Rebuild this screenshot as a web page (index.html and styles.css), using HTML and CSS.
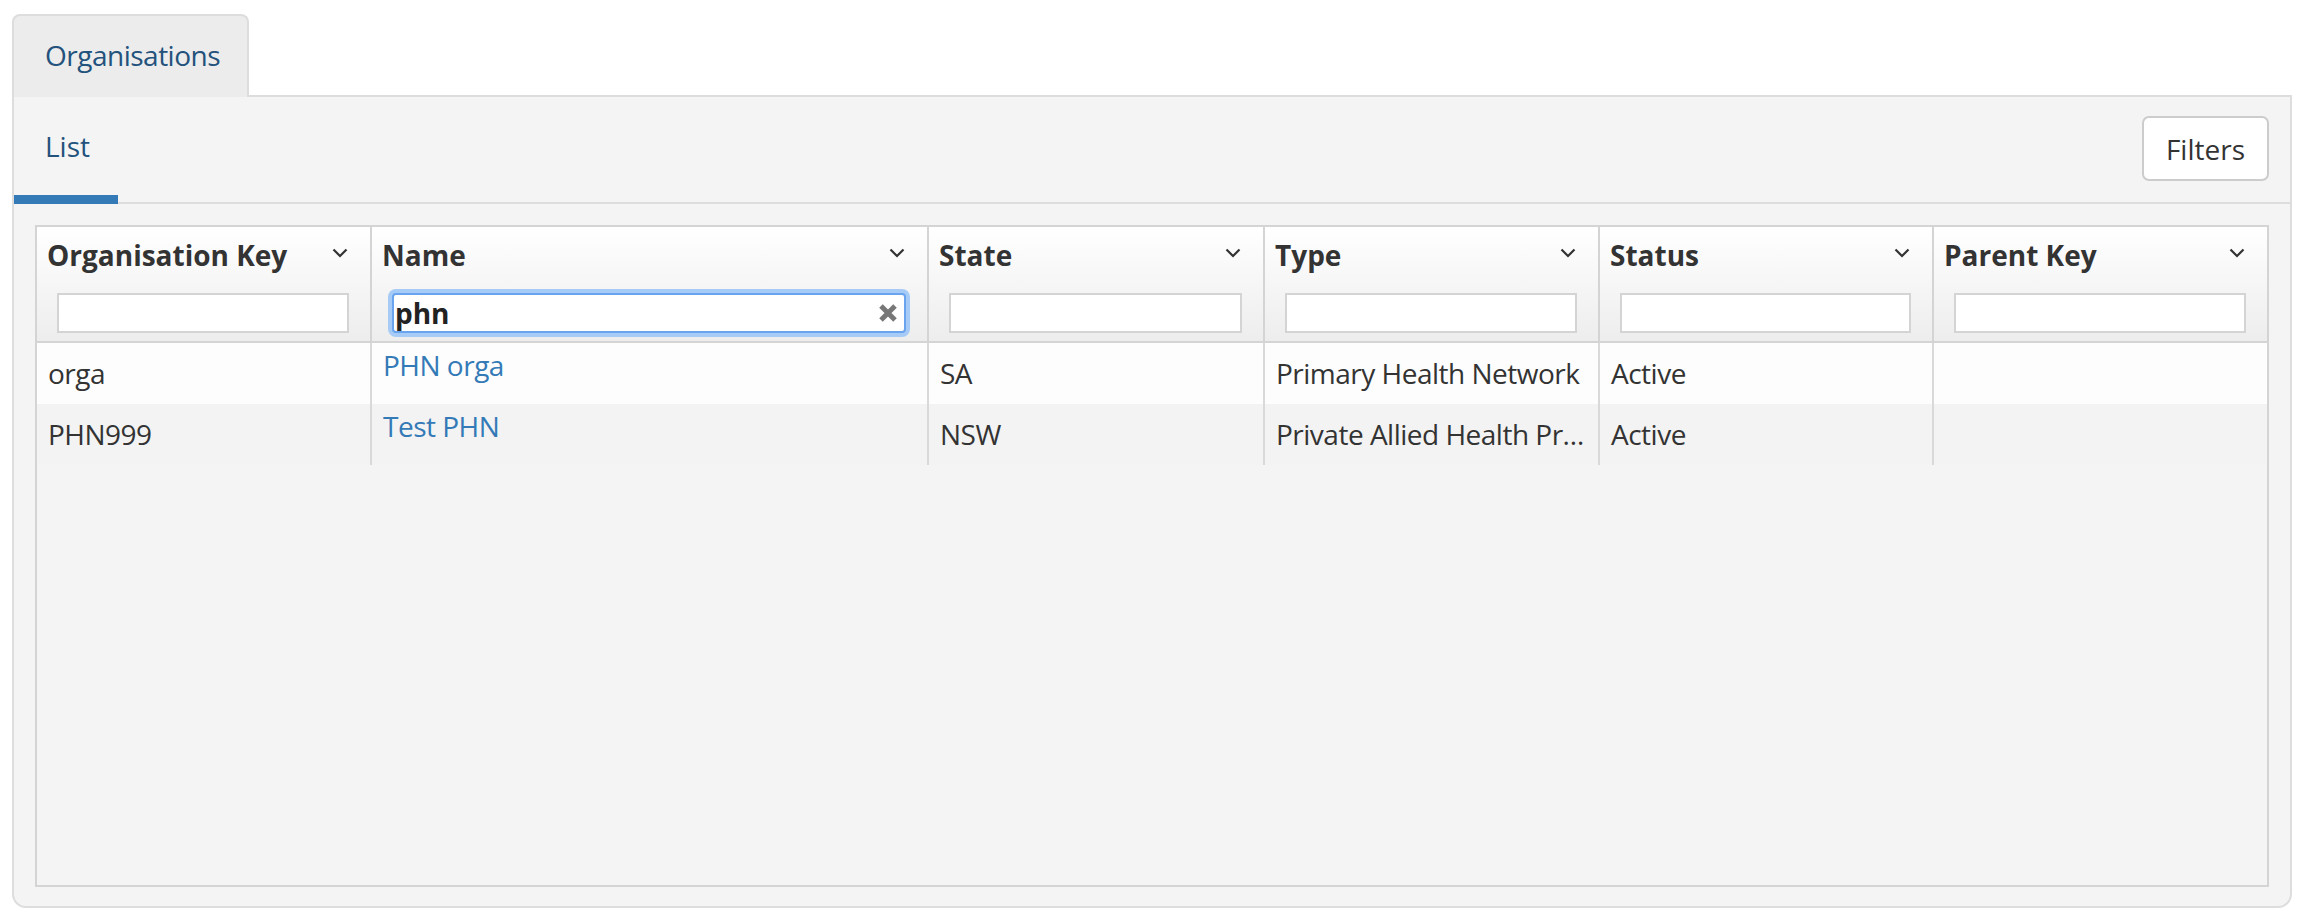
FILE: index.html
```html
<!DOCTYPE html>
<html lang="en">
<head>
<meta charset="utf-8">
<title>Organisations</title>
<link rel="stylesheet" href="styles.css">
</head>
<body>
<div class="page">
  <ul class="tabs">
    <li class="tab">Organisations</li>
  </ul>
  <div class="panel">
    <div class="subnav">
      <div class="subtab">List</div>
      <button class="btn">Filters</button>
    </div>
    <div class="panel-body">
      <div class="grid">
        <div class="grid-header">
          <div class="hcell">
            <div class="htitle"><span>Organisation Key</span><svg class="chev" viewBox="0 0 16 10"><path d="M1.5 1.5 L8 8 L14.5 1.5"/></svg></div>
            <div class="hfilter"><input class="finput" type="text"></div>
          </div>
          <div class="hcell">
            <div class="htitle"><span>Name</span><svg class="chev" viewBox="0 0 16 10"><path d="M1.5 1.5 L8 8 L14.5 1.5"/></svg></div>
            <div class="hfilter">
              <div class="focus-wrap">
                <input class="finput focused" type="text" value="phn">
                <svg class="clear" viewBox="0 0 20 20"><path d="M3 3 L17 17 M17 3 L3 17"/></svg>
              </div>
            </div>
          </div>
          <div class="hcell">
            <div class="htitle"><span>State</span><svg class="chev" viewBox="0 0 16 10"><path d="M1.5 1.5 L8 8 L14.5 1.5"/></svg></div>
            <div class="hfilter"><input class="finput" type="text"></div>
          </div>
          <div class="hcell">
            <div class="htitle"><span>Type</span><svg class="chev" viewBox="0 0 16 10"><path d="M1.5 1.5 L8 8 L14.5 1.5"/></svg></div>
            <div class="hfilter"><input class="finput" type="text"></div>
          </div>
          <div class="hcell">
            <div class="htitle"><span>Status</span><svg class="chev" viewBox="0 0 16 10"><path d="M1.5 1.5 L8 8 L14.5 1.5"/></svg></div>
            <div class="hfilter"><input class="finput" type="text"></div>
          </div>
          <div class="hcell last">
            <div class="htitle"><span>Parent Key</span><svg class="chev" viewBox="0 0 16 10"><path d="M1.5 1.5 L8 8 L14.5 1.5"/></svg></div>
            <div class="hfilter"><input class="finput" type="text"></div>
          </div>
        </div>
        <div class="grid-body">
          <div class="row odd">
            <div class="cell">orga</div>
            <div class="cell link-cell"><a href="#">PHN orga</a></div>
            <div class="cell">SA</div>
            <div class="cell">Primary Health Network</div>
            <div class="cell">Active</div>
            <div class="cell last"></div>
          </div>
          <div class="row even">
            <div class="cell">PHN999</div>
            <div class="cell link-cell"><a href="#">Test PHN</a></div>
            <div class="cell">NSW</div>
            <div class="cell">Private Allied Health Pr…</div>
            <div class="cell">Active</div>
            <div class="cell last"></div>
          </div>
        </div>
      </div>
    </div>
  </div>
</div>
</body>
</html>
```

FILE: styles.css
```css
* {
  box-sizing: border-box;
}

html, body {
  margin: 0;
  background: #ffffff;
}

body {
  font-family: "Open Sans", "Noto Sans", sans-serif;
  font-size: 28px;
  line-height: 40px;
  color: #333333;
}

.page {
  padding: 14px 8px 0 12px;
}

.tabs {
  display: flex;
  margin: 0;
  padding: 0;
  list-style: none;
}

.tab {
  position: relative;
  z-index: 1;
  width: 237px;
  height: 83px;
  margin-bottom: -2px;
  padding: 19px 0 0 31px;
  background: #ececec;
  border: 2px solid #dddddd;
  border-bottom: 0;
  border-radius: 8px 8px 0 0;
  color: #23527c;
  letter-spacing: -0.5px;
  white-space: nowrap;
}

.panel {
  height: 813px;
  background: #f4f4f4;
  border: 2px solid #dddddd;
  border-radius: 0 0 14px 14px;
}

.subnav {
  display: flex;
  align-items: flex-start;
  height: 107px;
  padding-right: 21px;
  border-bottom: 2px solid #dddddd;
}

.subtab {
  width: 104px;
  height: 107px;
  margin-bottom: -2px;
  padding: 29px 0 0 31px;
  border-bottom: 9px solid #337ab7;
  color: #23527c;
}

.btn {
  margin: 19px 0 0 auto;
  height: 65px;
  padding: 0 22px;
  background: #ffffff;
  border: 2px solid #cccccc;
  border-radius: 7px;
  font-family: inherit;
  font-size: 28px;
  line-height: 40px;
  color: #333333;
}

.panel-body {
  padding: 21px;
}

.grid {
  height: 662px;
  background: #f4f4f4;
  border: 2px solid #d4d4d4;
}

.grid-header,
.row {
  display: grid;
  grid-template-columns: 335px 557px 336px 335px 334px 1fr;
}

.grid-header {
  height: 116px;
  background: linear-gradient(to bottom, #ffffff, #ededed);
  border-bottom: 2px solid #d4d4d4;
}

.hcell {
  padding-top: 8px;
  border-right: 2px solid #d4d4d4;
}

.hcell.last,
.cell.last {
  border-right: 0;
}

.htitle {
  display: flex;
  justify-content: space-between;
  align-items: flex-start;
  padding: 0 22px 0 10px;
  font-weight: 700;
  white-space: nowrap;
}

.chev {
  width: 16px;
  height: 10px;
  margin-top: 13px;
  fill: none;
  stroke: #333333;
  stroke-width: 2.2;
}

.hfilter {
  padding: 18px 21px 0 20px;
}

.finput {
  display: block;
  width: 100%;
  height: 40px;
  margin: 0;
  padding: 0 2px;
  background: #ffffff;
  border: 2px solid #d4d4d4;
  border-radius: 0;
  font-family: inherit;
  font-size: 28px;
  font-weight: 700;
  color: #222222;
  outline: none;
}

.focus-wrap {
  position: relative;
}

.finput.focused {
  border-color: #6aa4ee;
  border-radius: 4px;
  box-shadow: 0 0 0 4px #a6cbf6;
  padding-left: 1px;
}

.clear {
  position: absolute;
  top: 10px;
  right: 8px;
  width: 20px;
  height: 20px;
  fill: none;
  stroke: #777777;
  stroke-width: 5;
}

.row {
  height: 61px;
}

.row.odd {
  background: #fdfdfd;
}

.row.even {
  background: #f3f3f3;
}

.cell {
  padding: 0 4px 0 11px;
  border-right: 2px solid #d9d9d9;
  line-height: 61px;
  letter-spacing: -0.5px;
  white-space: nowrap;
  overflow: hidden;
  text-overflow: ellipsis;
}

.cell.link-cell {
  padding-top: 2px;
  line-height: 40px;
}

.cell a {
  color: #337ab7;
  text-decoration: none;
}
```
